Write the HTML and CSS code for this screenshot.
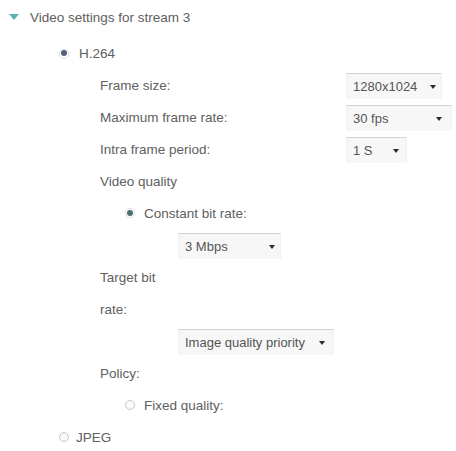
FILE: index.html
```html
<!DOCTYPE html>
<html>
<head>
<meta charset="utf-8">
<link rel="stylesheet" href="styles.css">
</head>
<body>
<div class="panel">
  <div class="head"><span class="tri"></span><span class="title">Video settings for stream 3</span></div>
  <div class="opt h264"><span class="radio on blue"></span><span>H.264</span></div>
  <div class="fields">
    <div class="row"><span class="lbl">Frame size:</span><div class="sel w-frame"><span>1280x1024</span><i class="arr"></i></div></div>
    <div class="row"><span class="lbl">Maximum frame rate:</span><div class="sel w-rate"><span>30 fps</span><i class="arr"></i></div></div>
    <div class="row"><span class="lbl">Intra frame period:</span><div class="sel w-intra"><span>1 S</span><i class="arr"></i></div></div>
    <div class="row"><span class="lbl">Video quality</span></div>
    <div class="row sub"><span class="radio on teal"></span><span>Constant bit rate:</span></div>
    <div class="row sub2"><div class="sel w-mbps"><span>3 Mbps</span><i class="arr"></i></div></div>
    <div class="row"><span class="lbl">Target bit</span></div>
    <div class="row"><span class="lbl">rate:</span></div>
    <div class="row sub2"><div class="sel w-prio"><span>Image quality priority</span><i class="arr"></i></div></div>
    <div class="row"><span class="lbl">Policy:</span></div>
    <div class="row sub"><span class="radio"></span><span>Fixed quality:</span></div>
  </div>
  <div class="opt jpeg"><span class="radio"></span><span>JPEG</span></div>
</div>
</body>
</html>
```
FILE: styles.css
```css
html, body {
  margin: 0;
  padding: 0;
  background: #ffffff;
}
body {
  font-family: "Liberation Sans", Arial, sans-serif;
  font-size: 13.5px;
  color: #606060;
}
.panel {
  width: 456px;
  height: 451px;
  overflow: hidden;
}
.head {
  height: 34px;
  display: flex;
  align-items: center;
  padding-left: 9px;
}
.tri {
  width: 0;
  height: 0;
  border-left: 5px solid transparent;
  border-right: 5px solid transparent;
  border-top: 6px solid #5cb3b0;
  margin-right: 11px;
  margin-top: -1px;
}
.opt {
  display: flex;
  align-items: center;
}
.h264 {
  height: 31px;
  padding-top: 4px;
  padding-left: 59px;
}
.h264 .radio { margin-right: 10px; }
.jpeg {
  height: 32px;
  padding-left: 59px;
}
.jpeg .radio { margin-right: 7px; }
.fields {
  padding-left: 100px;
}
.row {
  height: 32px;
  display: flex;
  align-items: center;
}
.lbl {
  width: 246px;
  flex: none;
}
.sub {
  padding-left: 25px;
}
.sub .radio { margin-right: 9px; }
.sub2 {
  padding-left: 78px;
}
.radio {
  width: 10px;
  height: 10px;
  border-radius: 50%;
  box-sizing: border-box;
  border: 1.5px solid #c8c8c8;
  background: #fafafa;
  flex: none;
}
.radio.on {
  border: 1.5px solid #dde2e6;
  background: #fff;
  position: relative;
}
.radio.on::after {
  content: "";
  position: absolute;
  left: 0.5px;
  top: 0.5px;
  width: 6px;
  height: 6px;
  border-radius: 50%;
}
.radio.blue::after { background: #55607e; }
.radio.teal::after { background: #4a716f; }
.sel {
  height: 26px;
  box-sizing: border-box;
  display: flex;
  align-items: center;
  padding-left: 6px;
  background: #f7f7f7;
  border-top: 1px solid #d2d2d2;
  border-left: 1px solid #f0f0f0;
  border-right: 1px solid #f0f0f0;
  color: #555555;
  font-size: 13px;
  margin-top: 2px;
}
.sel span { flex: 1; }
.arr {
  width: 0;
  height: 0;
  border-left: 3.5px solid transparent;
  border-right: 3.5px solid transparent;
  border-top: 4px solid #2a2a2a;
  flex: none;
}
.w-frame { width: 96px; padding-right: 5px; }
.w-rate { width: 106px; padding-right: 9px; }
.w-intra { width: 61px; padding-right: 7px; }
.w-mbps { width: 103px; padding-right: 5px; }
.w-prio { width: 156px; padding-right: 8px; }
```
